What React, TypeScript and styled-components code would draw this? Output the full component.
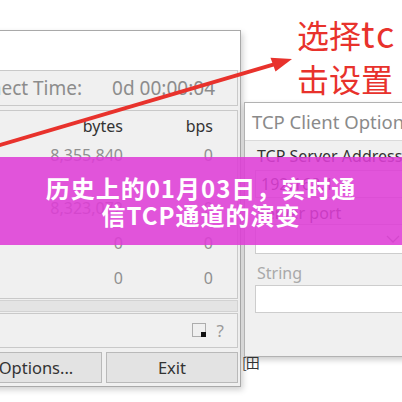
import React from 'react';
import styled, { createGlobalStyle } from 'styled-components';

const GlobalStyle = createGlobalStyle`
  html, body {
    margin: 0;
    padding: 0;
    background: #ffffff;
  }
  #root {
    width: 402px;
    height: 402px;
  }
`;

const Desktop = styled.div`
  position: relative;
  width: 402px;
  height: 402px;
  overflow: hidden;
  background: #ffffff;
  font-family: 'Noto Sans', 'Open Sans', sans-serif;
`;

// left window: the traffic monitor, its left part runs off the picture
const MonitorWindow = styled.div`
  position: absolute;
  left: -62px;
  top: 30px;
  width: 299px;
  height: 355px;
  border: 1px solid #a9a9a9;
  background: #f0f0f0;
  box-shadow: 2px 3px 6px rgba(0, 0, 0, 0.18);
  display: flex;
  flex-direction: column;
  padding-right: 2px;
`;

const WhiteStrip = styled.div`
  height: 39px;
  background: #ffffff;
  margin-right: -2px;
`;

const Panel = styled.div<{ $h: number; $mt?: number }>`
  height: ${p => p.$h}px;
  margin-top: ${p => p.$mt ?? 0}px;
  border: 1px solid #c9c9c9;
  background: #f0f0f0;
  box-sizing: border-box;
`;

const TimeRow = styled(Panel)`
  display: flex;
  align-items: center;
  justify-content: flex-end;
  gap: 30px;
  padding-right: 22px;
  font-size: 19px;
  color: #8c8c8c;
  white-space: nowrap;
`;

const ListRow = styled.div<{ $h: number; $head?: boolean }>`
  height: ${p => p.$h}px;
  display: grid;
  grid-template-columns: 1fr 90px 90px;
  align-items: center;
  padding-right: 24px;
  font-size: 16px;
  color: ${p => (p.$head ? '#333333' : '#8f8f8f')};
  text-align: right;
`;

const ScrollStrip = styled(Panel)`
  background: #e4e4e4;
  border-color: #d2d2d2;
`;

const StatusBar = styled(Panel)`
  display: flex;
  align-items: center;
  justify-content: flex-end;
  gap: 10px;
  padding-right: 13px;
`;

const Help = styled.span`
  font-size: 17px;
  color: #9a9a9a;
`;

const ButtonRow = styled.div`
  margin-top: 4px;
  display: flex;
  justify-content: flex-end;
  gap: 4px;
`;

const WinButton = styled.div`
  width: 132px;
  height: 31px;
  box-sizing: border-box;
  border: 1px solid #b9b9b9;
  background: #e3e3e3;
  display: flex;
  align-items: center;
  justify-content: center;
  font-size: 16.5px;
  color: #333333;
`;

// right window: TCP client options dialog
const OptionsWindow = styled.div`
  position: absolute;
  left: 244px;
  top: 102px;
  width: 180px;
  height: 253px;
  border: 1px solid #b2b2b2;
  background: #f0f0f0;
  box-shadow: 0 3px 6px rgba(0, 0, 0, 0.2);
  display: flex;
  flex-direction: column;
`;

const DialogTitle = styled.div`
  height: 38px;
  background: #ffffff;
  border-bottom: 1px solid #dadada;
  display: flex;
  align-items: center;
  padding-left: 7px;
  font-size: 18.5px;
  color: #8a8a8a;
  white-space: nowrap;
  box-sizing: border-box;
`;

const DialogBody = styled.div`
  padding-left: 10px;
  display: flex;
  flex-direction: column;
`;

const FieldLabel = styled.div<{ $dim?: boolean; $mt?: number }>`
  margin-top: ${p => p.$mt ?? 0}px;
  height: 22px;
  line-height: 22px;
  padding-left: 2px;
  font-size: 16px;
  color: ${p => (p.$dim ? '#a9a9a9' : '#333333')};
  white-space: nowrap;
`;

const Field = styled.div<{ $h: number; $mt?: number }>`
  margin-top: ${p => p.$mt ?? 0}px;
  height: ${p => p.$h}px;
  box-sizing: border-box;
  border: 1px solid #cdcdcd;
  background: #ffffff;
  display: flex;
  align-items: center;
  padding-left: 5px;
  font-size: 16px;
  color: #333333;
  position: relative;
`;

const Chevron = styled.svg`
  position: absolute;
  left: 130px;
  top: 10px;
`;

const Caret = styled.div`
  position: absolute;
  left: 242px;
  top: 352px;
  font-family: 'Noto Sans CJK SC', sans-serif;
  font-size: 14px;
  color: #333333;
  letter-spacing: -1px;
`;

const Arrow = styled.svg`
  position: absolute;
  left: 0;
  top: 0;
`;

const Note = styled.div`
  position: absolute;
  left: 297px;
  top: 10px;
  font-family: 'Noto Sans CJK SC', sans-serif;
  font-size: 32px;
  line-height: 44px;
  color: #e8322c;
  white-space: nowrap;
`;

const NoteLatin = styled.span`
  font-size: 36px;
  letter-spacing: 2px;
`;

const Banner = styled.div`
  position: absolute;
  left: 0;
  right: 0;
  top: 157px;
  height: 88px;
  background: rgba(222, 62, 214, 0.88);
  display: flex;
  align-items: center;
  justify-content: center;
  padding: 0 40px;
  box-sizing: border-box;
`;

const BannerTitle = styled.h1`
  margin: 0;
  font-family: 'Noto Sans CJK SC', 'Noto Sans', sans-serif;
  font-weight: 700;
  font-size: 24px;
  line-height: 27px;
  letter-spacing: 1px;
  color: #ffffff;
  text-align: center;
`;

const rows = [
  { h: 28, bytes: '8,355,840', bps: '0' },
  { h: 21, bytes: '', bps: '' },
  { h: 35, bytes: '8,323,072', bps: '0' },
  { h: 35, bytes: '0', bps: '0' },
  { h: 35, bytes: '0', bps: '0' },
];

const App: React.FC = () => {
  return (
    <Desktop>
      <GlobalStyle />

      <MonitorWindow>
        <WhiteStrip />
        <TimeRow $h={36}>
          <span>Connect Time:</span>
          <span>0d 00:00:04</span>
        </TimeRow>
        <Panel $h={189} $mt={4}>
          <ListRow $h={30} $head>
            <span />
            <span>bytes</span>
            <span>bps</span>
          </ListRow>
          {rows.map((r, i) => (
            <ListRow key={i} $h={r.h}>
              <span />
              <span>{r.bytes}</span>
              <span>{r.bps}</span>
            </ListRow>
          ))}
        </Panel>
        <ScrollStrip $h={12} $mt={1} />
        <StatusBar $h={35} $mt={1}>
          <svg width="15" height="15" viewBox="0 0 15 15">
            <rect x="0.5" y="0.5" width="13" height="13" fill="none" stroke="#6a6a6a" strokeDasharray="1 1" />
            <rect x="9" y="9" width="5" height="5" fill="#111" />
          </svg>
          <Help>?</Help>
        </StatusBar>
        <ButtonRow>
          <WinButton>Options...</WinButton>
          <WinButton>Exit</WinButton>
        </ButtonRow>
      </MonitorWindow>

      <OptionsWindow>
        <DialogTitle>TCP Client Options</DialogTitle>
        <DialogBody>
          <FieldLabel $mt={4}>TCP Server Address</FieldLabel>
          <Field $h={28} $mt={3}>192.168.1.1</Field>
          <FieldLabel $mt={4}>Server port</FieldLabel>
          <Field $h={30}>
            <Chevron width="14" height="9" viewBox="0 0 14 9">
              <polyline points="1,1 7,7 13,1" fill="none" stroke="#8a8a8a" strokeWidth="1.3" />
            </Chevron>
          </Field>
          <FieldLabel $dim $mt={8}>String</FieldLabel>
          <Field $h={28} $mt={1} />
        </DialogBody>
      </OptionsWindow>

      <Caret>[田</Caret>

      <Arrow width="402" height="402" viewBox="0 0 402 402">
        <line x1="-5" y1="146.5" x2="274" y2="64.4" stroke="#e8322c" strokeWidth="4" />
        <polygon points="292,59 275.5,71.6 270.5,57.8" fill="#e8322c" />
      </Arrow>

      <Note>
        <div>选择<NoteLatin>tc</NoteLatin></div>
        <div>击设置</div>
      </Note>

      <Banner>
        <BannerTitle>历史上的01月03日，实时通信TCP通道的演变</BannerTitle>
      </Banner>
    </Desktop>
  );
};

export default App;
